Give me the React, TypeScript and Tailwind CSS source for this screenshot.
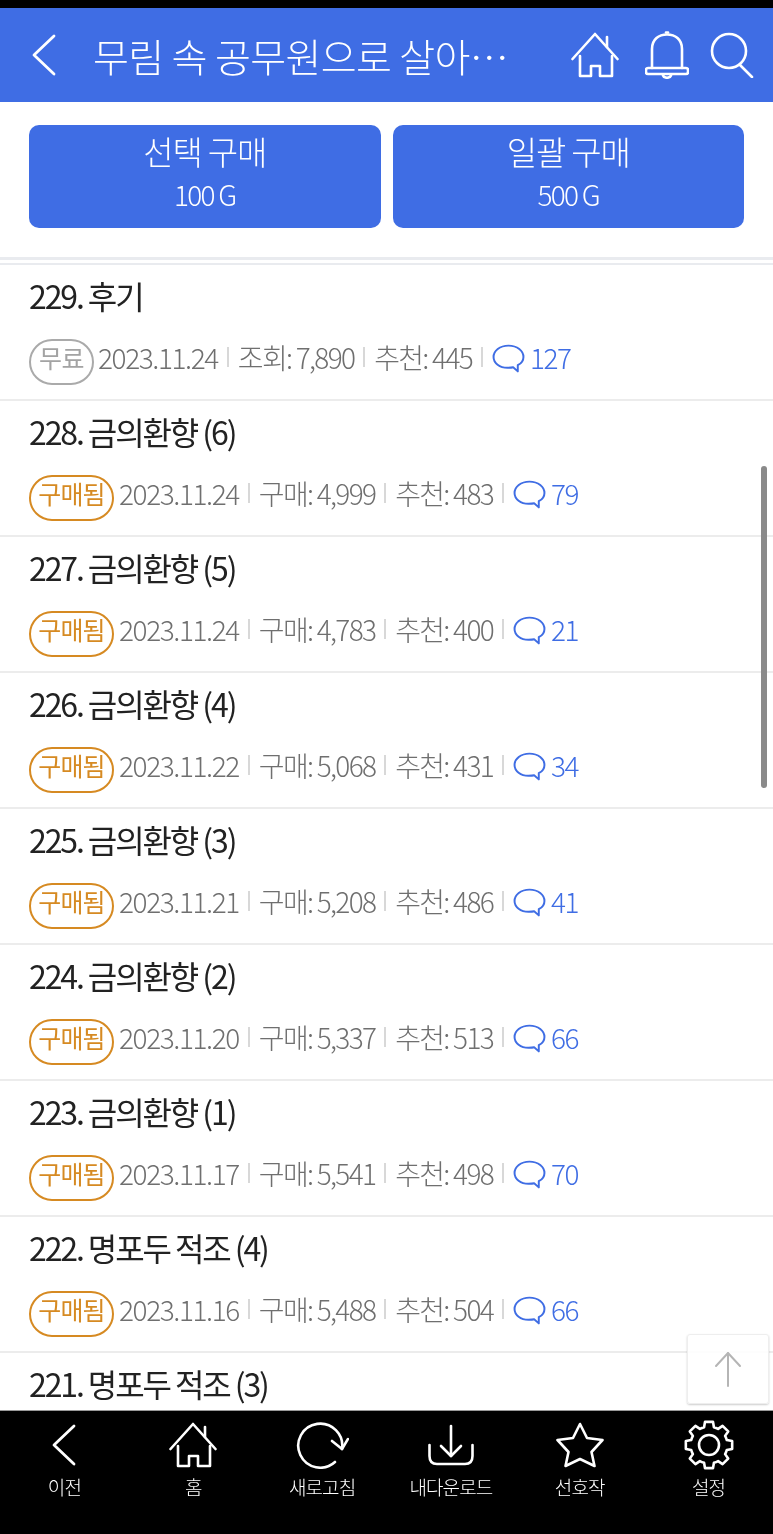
import React from "react";

const KR = "font-['Noto_Sans_CJK_KR','Noto_Sans',sans-serif]";

// --- Data ---
interface Episode {
  title: string;
  date: string;
  countLabel: string;
  count: string;
  likes: string;
  comments: string;
  free?: boolean;
}

const episodes: Episode[] = [
  { title: "229. 후기", date: "2023.11.24", countLabel: "조회", count: "7,890", likes: "445", comments: "127", free: true },
  { title: "228. 금의환향 (6)", date: "2023.11.24", countLabel: "구매", count: "4,999", likes: "483", comments: "79" },
  { title: "227. 금의환향 (5)", date: "2023.11.24", countLabel: "구매", count: "4,783", likes: "400", comments: "21" },
  { title: "226. 금의환향 (4)", date: "2023.11.22", countLabel: "구매", count: "5,068", likes: "431", comments: "34" },
  { title: "225. 금의환향 (3)", date: "2023.11.21", countLabel: "구매", count: "5,208", likes: "486", comments: "41" },
  { title: "224. 금의환향 (2)", date: "2023.11.20", countLabel: "구매", count: "5,337", likes: "513", comments: "66" },
  { title: "223. 금의환향 (1)", date: "2023.11.17", countLabel: "구매", count: "5,541", likes: "498", comments: "70" },
  { title: "222. 명포두 적조 (4)", date: "2023.11.16", countLabel: "구매", count: "5,488", likes: "504", comments: "66" },
  { title: "221. 명포두 적조 (3)", date: "2023.11.16", countLabel: "구매", count: "5,300", likes: "490", comments: "52" },
];

// --- Icons ---
const stroke = {
  fill: "none",
  stroke: "currentColor",
  strokeLinecap: "round" as const,
  strokeLinejoin: "round" as const,
};

const BackIcon = ({ className }: { className: string }) => (
  <svg viewBox="0 0 24 42" className={className} {...stroke} strokeWidth={2.8}>
    <path d="M22 2 L2 21 L22 40" />
  </svg>
);

const HomeIcon = () => (
  <svg viewBox="0 0 48 46" className="h-[46px] w-[48px]" {...stroke} strokeWidth={2.6}>
    <path d="M1.5 27 L24 2 L46.5 27" />
    <path d="M36 15 V5" />
    <path d="M9 24 V44 H20 V34 H29 V44 H41 V24" />
  </svg>
);

const BellIcon = () => (
  <svg viewBox="0 0 44 48" className="h-[48px] w-[44px]" {...stroke} strokeWidth={2.6}>
    <path d="M7 37 V18 C7 8 14 3.5 22 3.5 C30 3.5 37 8 37 18 V37" />
    <path d="M3 37 H41 Q43 37 43 39 V41 Q43 43 41 43 H3 Q1 43 1 41 V39 Q1 37 3 37 Z" />
    <path d="M18 44.5 C19 47.5 25 47.5 26 44.5" />
    <path d="M21 1.5 H23" />
  </svg>
);

const SearchIcon = () => (
  <svg viewBox="0 0 44 46" className="h-[46px] w-[44px]" {...stroke} strokeWidth={2.6}>
    <circle cx="19" cy="19" r="17" />
    <path d="M30 33 L42 45" />
  </svg>
);

const CommentIcon = () => (
  <svg viewBox="0 0 32 28" className="mt-[2px] h-[29px] w-[33px] shrink-0 text-[#3f6de4]" {...stroke} strokeWidth={1.9}>
    <path d="M16 1.5 C7.5 1.5 1.5 6.5 1.5 12.5 C1.5 18.5 7.5 23 15 23 C17 23 19 23 20.5 22.5 L25 26.5 L25 20.5 C29 18.5 30.5 15.5 30.5 12.5 C30.5 6.5 24.5 1.5 16 1.5 Z" />
  </svg>
);

const RefreshIcon = () => (
  <svg viewBox="0 0 54 48" className="h-[48px] w-[54px]" {...stroke} strokeWidth={2.6}>
    <path d="M40 41 A 22 22 0 1 1 47 28" />
    <path d="M37 20 L47 28 L53 18" />
  </svg>
);

const DownloadIcon = () => (
  <svg viewBox="0 0 46 42" className="h-[42px] w-[46px]" {...stroke} strokeWidth={2.6}>
    <path d="M23 2 V32" />
    <path d="M13 22 L23 32 L33 22" />
    <path d="M1.5 21 V32 C1.5 37 4 40 9 40 H37 C42 40 44.5 37 44.5 32 V21" />
  </svg>
);

const StarIcon = () => (
  <svg viewBox="0 0 48 46" className="h-[46px] w-[48px]" {...stroke} strokeWidth={2.6}>
    <path d="M24 2 L31 16 L46.5 18 L35.5 30 L38.5 44 L24 37 L9.5 44 L12.5 30 L1.5 18 L17 16 Z" />
  </svg>
);

// eight rounded teeth around the hub
const gearPath = (() => {
  const c = 25;
  const point = (radius: number, angle: number) =>
    `${(c + radius * Math.sin(angle)).toFixed(2)} ${(c - radius * Math.cos(angle)).toFixed(2)}`;
  const step = Math.PI / 4;
  let d = "";
  for (let i = 0; i < 8; i++) {
    const a = i * step;
    d += `${i === 0 ? "M" : "L"}${point(18.5, a - 0.27)} L${point(23.5, a - 0.17)} L${point(23.5, a + 0.17)} L${point(18.5, a + 0.27)} A18.5 18.5 0 0 1 ${point(18.5, a + step - 0.27)} `;
  }
  return d + "Z";
})();

const GearIcon = () => (
  <svg viewBox="0 0 50 50" className="h-[50px] w-[50px]" {...stroke} strokeWidth={2.6}>
    <path d={gearPath} />
    <circle cx="25" cy="25" r="10" />
  </svg>
);

// --- Components ---
const BuyButton = ({ label, price }: { label: string; price: string }) => (
  <button className="flex h-[103px] flex-1 flex-col items-center rounded-[10px] bg-[#3f6de4] pt-[4px] text-white">
    <span className="text-[33px] leading-[44px] font-light tracking-[-1.1px]">{label}</span>
    <span className="mt-[2px] text-[28px] leading-[38px] font-light tracking-[-1.7px]">{price}</span>
  </button>
);

const Divider = () => <span className="mx-[9px] h-[20px] w-[2px] shrink-0 bg-[#d8d8d8]" />;

const EpisodeRow = ({ item }: { item: Episode }) => (
  <li className="h-[136px] shrink-0 border-b-2 border-[#ececec] pt-[7px] pl-[29px]">
    <div className="text-[32px] leading-[46px] font-normal tracking-[-2.1px] text-[#222]">{item.title}</div>
    <div className="mt-[16px] flex h-[46px] items-center text-[28px] font-light tracking-[-1.4px] text-[#6f6f6f]">
      {item.free ? (
        <span className="mt-[9px] mr-[4px] flex h-[46px] w-[65px] items-center justify-center rounded-full border-2 border-[#aaa] pb-[8px] text-[25px] font-normal tracking-[-0.5px] text-[#a3a3a3]">
          무료
        </span>
      ) : (
        <span className="mt-[9px] mr-[5px] flex h-[46px] w-[85px] items-center justify-center rounded-full border-2 border-[#d68a22] pb-[8px] text-[25px] font-normal tracking-[-0.9px] text-[#d68a22]">
          구매됨
        </span>
      )}
      <span>{item.date}</span>
      <Divider />
      <span className="tracking-[-1.7px]">
        {item.countLabel}: {item.count}
      </span>
      <Divider />
      <span className="tracking-[-1.7px]">추천: {item.likes}</span>
      <Divider />
      <CommentIcon />
      <span className="ml-[5px] text-[#3f6de4]">{item.comments}</span>
    </div>
  </li>
);

const NavItem = ({ icon, label }: { icon: React.ReactNode; label: string }) => (
  <div className="flex flex-1 flex-col items-center text-white">
    <div className="flex h-[48px] items-center justify-center">{icon}</div>
    <span className="mt-[4px] text-[19px] leading-[28px] font-light tracking-[-0.9px]">{label}</span>
  </div>
);

const App: React.FC = () => {
  return (
    <div className={`relative flex h-[1534px] w-[773px] flex-col overflow-hidden bg-white will-change-transform ${KR}`}>
      <div className="h-[8px] shrink-0 bg-black" />

      {/* Top bar */}
      <header className="flex h-[94px] shrink-0 items-center bg-[#3f6de4] text-white">
        <BackIcon className="ml-[32px] h-[42px] w-[24px]" />
        <h1 className="ml-[37px] w-[421px] whitespace-nowrap text-[39px] font-light tracking-[-0.6px]">
          무림 속 공무원으로 살아⋯
        </h1>
        <div className="ml-[57px] flex items-center">
          <HomeIcon />
          <div className="ml-[26px]"><BellIcon /></div>
          <div className="ml-[21px]"><SearchIcon /></div>
        </div>
      </header>

      {/* Purchase actions */}
      <div className="flex h-[158px] shrink-0 gap-[12px] border-b-[3px] border-[#e9ebef] px-[29px] pt-[23px]">
        <BuyButton label="선택 구매" price="100 G" />
        <BuyButton label="일괄 구매" price="500 G" />
      </div>
      <div className="h-[5px] shrink-0 border-b-[2px] border-[#e9ebef]" />

      {/* Episode list */}
      <ul className="flex min-h-0 flex-1 flex-col overflow-hidden">
        {episodes.map((item) => (
          <EpisodeRow key={item.title} item={item} />
        ))}
      </ul>

      {/* Bottom navigation */}
      <nav className="flex h-[124px] shrink-0 items-start border-t border-[#999] bg-black pt-[10px]">
        <NavItem icon={<BackIcon className="h-[42px] w-[24px]" />} label="이전" />
        <NavItem icon={<HomeIcon />} label="홈" />
        <NavItem icon={<RefreshIcon />} label="새로고침" />
        <NavItem icon={<DownloadIcon />} label="내다운로드" />
        <NavItem icon={<StarIcon />} label="선호작" />
        <NavItem icon={<GearIcon />} label="설정" />
      </nav>

      {/* Scrollbar thumb */}
      <div className="absolute top-[466px] left-[761px] h-[322px] w-[6px] rounded-full bg-[#8a8a8a]" />

      {/* Scroll to top */}
      <button className="absolute top-[1334px] left-[687px] flex h-[70px] w-[82px] items-center justify-center rounded-[3px] border border-[#eee] bg-white/90 shadow-[0_1px_2px_rgba(0,0,0,0.2)]">
        <svg viewBox="0 0 28 36" className="h-[36px] w-[28px] text-[#b5b5b5]" {...stroke} strokeWidth={2}>
          <path d="M14 35 V2" />
          <path d="M2 15 L14 2 L26 15" />
        </svg>
      </button>
    </div>
  );
};

export default App;
